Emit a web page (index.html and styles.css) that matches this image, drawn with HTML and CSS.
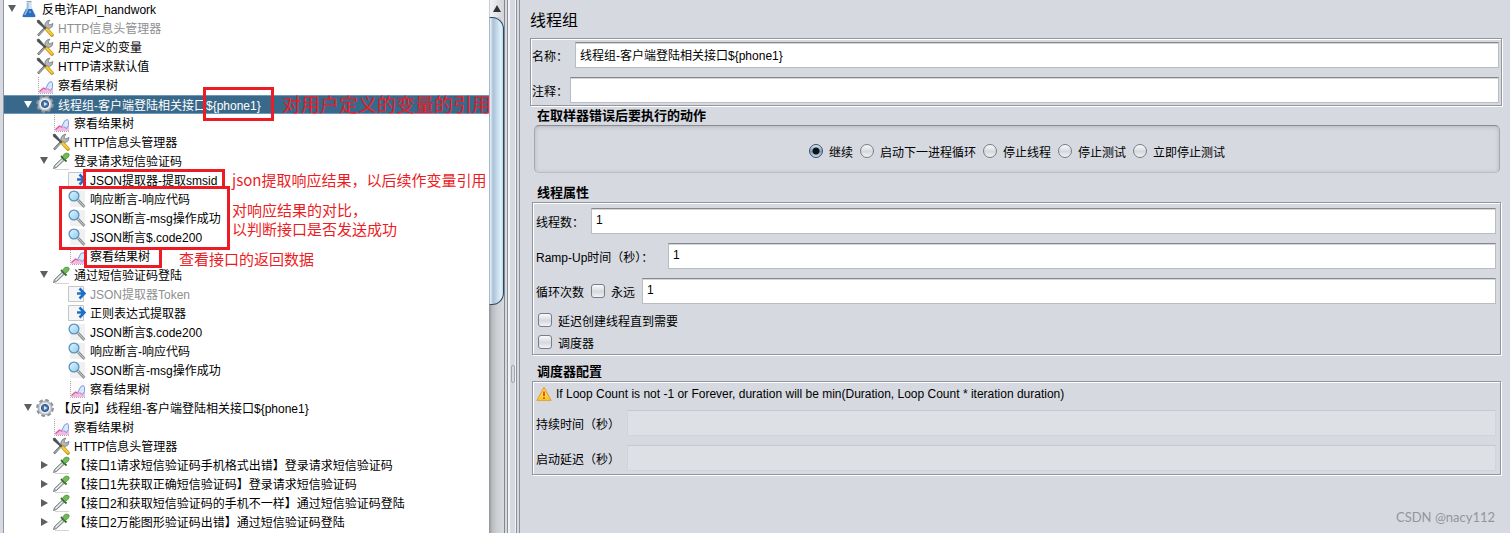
FILE: index.html
```html
<!DOCTYPE html>
<html lang="zh-CN">
<head>
    <meta charset="UTF-8">
    <meta name="viewport" content="width=device-width, initial-scale=1.0">
    <title>线程组</title>
    <link rel="stylesheet" href="styles.css">
</head>
<body>
    <!-- icon set -->
    <svg class="sprite" aria-hidden="true">
        <defs>
            <linearGradient id="lens" x1="0" y1="0" x2="1" y2="1">
                <stop offset="0" stop-color="#e4f5fd"/><stop offset="1" stop-color="#8ccbee"/>
            </linearGradient>
            <linearGradient id="flame" x1="0" y1="0" x2="0" y2="1">
                <stop offset="0" stop-color="#fff36a"/><stop offset="1" stop-color="#fbc01c"/>
            </linearGradient>
        </defs>
        <symbol id="flask" viewBox="0 0 18 18">
            <path d="M7 2h4v5l4 8q1 2-1 2H4q-2 0-1-2l4-8z" fill="#d7e6f4" stroke="#b4c6d8" stroke-width=".7"/>
            <path d="M6 9h6l3 6q1 2-1 2H4q-2 0-1-2z" fill="#2c6fc0"/>
            <path d="M7 3h1.500v6l-3 6H4l3-7z" fill="#8db9e4"/>
            <circle cx="10" cy="12" r="1" fill="#7ab0ea"/>
            <path d="M6.500 1.500h5" stroke="#93a4b5"/>
        </symbol>
        <symbol id="tools" viewBox="0 0 18 18">
            <path d="M2 16.500 10 8" stroke="#5d6266" stroke-width="2.400"/>
            <path d="M2.500 16 10 8.500" stroke="#d5d8da" stroke-width="1"/>
            <path d="M9 8.500q-1-4 2-6.500l3-1-2 3 1.500 2 3.500-1.500q0 4-3.500 5z" fill="#b3b7b9" stroke="#6c7073" stroke-width=".7"/>
            <path d="M1 1.500l2-.5L10 9 9 10 1.500 3.500z" fill="#4d5154" stroke="#3d4043" stroke-width=".5"/>
            <path d="M11 10.500 16 16" stroke="#b98f14" stroke-width="3.600" stroke-linecap="round"/>
            <path d="M11 10.500 15.800 15.500" stroke="#f7ca38" stroke-width="2.400" stroke-linecap="round"/>
        </symbol>
        <symbol id="chart" viewBox="0 0 18 18">
            <path d="M2 1h15v16H2z" fill="#fbfbfc"/>
            <path d="M2.500 1v16.500H18" fill="none" stroke="#a8a8b0" stroke-dasharray="1 1"/>
            <path d="M3 17v-1l4-4 3 1 2-3 5 2v5z" fill="#f5b8e4"/>
            <path d="M3.500 15.500l4-3.500 3 1.500" fill="none" stroke="#e0568c" stroke-width="1.200"/>
            <path d="M9.500 13q0-3 2-4 .5-3 4-3.500l1 1.500v4l-2 3-3-2z" fill="#d9e6fb"/>
            <path d="M9.500 13l2-4q.5-3 4-3.500l1 2v4l-2 3-3-2" fill="none" stroke="#7c9ce0"/>
        </symbol>
        <symbol id="gear" viewBox="0 0 18 18">
            <circle cx="9" cy="9" r="7.700" fill="none" stroke="#8b9198" stroke-width="2.400" stroke-dasharray="3.540 2.508"/>
            <circle cx="9" cy="9" r="7" fill="#c9cdd2" stroke="#9ba1a8" stroke-width=".8"/>
            <circle cx="9" cy="9" r="5.200" fill="#eef0f2"/>
            <circle cx="9" cy="9" r="3.600" fill="#4274b4" stroke="#36527c"/>
            <path d="M8 7l3.500 2L8 11z" fill="#d8e8fa"/>
        </symbol>
        <symbol id="dropper" viewBox="0 0 18 18">
            <path d="M3 17.500h14" stroke="#d4d4d4"/>
            <path d="M1.500 16.500l1-3L10.500 6l2 2L4.500 15.500z" fill="#c3cbcb" stroke="#6b7072" stroke-width=".9"/>
            <path d="M4 14l6-6" stroke="#fff" stroke-width=".8"/>
            <path d="M9 4l5.500 5.500" stroke="#36672e" stroke-width="1.800"/>
            <path d="M10.500 4.500q2-4 4.500-3.500 3 .5 2 3-1 2-4 3.500z" fill="#74b957" stroke="#4a8d3a" stroke-width=".7"/>
        </symbol>
        <symbol id="arrow" viewBox="0 0 18 18">
            <path d="M.5 1.500h15v15H.5z" fill="#f6f6f7" stroke="#c3c5c8"/>
            <path d="M9 8.500h7M11.500 3.500l5 5-5 5" fill="none" stroke="#1f6fc8" stroke-width="2.600"/>
        </symbol>
        <symbol id="magnifier" viewBox="0 0 18 18">
            <path d="M2 1h15v16H2z" fill="#f0f0f1"/>
            <path d="M10 10l6.500 7" stroke="#85898c" stroke-width="2.600"/>
            <path d="M10 10l6.500 7" stroke="#d0d3d5"/>
            <circle cx="6" cy="6" r="4.900" fill="url(#lens)" stroke="#5a93bb" stroke-width="1.300"/>
        </symbol>
        <symbol id="warning" viewBox="0 0 16 16">
            <path d="M8 1.500 15 14.500H1z" fill="url(#flame)" stroke="#e8a23a" stroke-width="1.200" stroke-linejoin="round"/>
            <path d="M8 5.500v4.500M8 11.200v1.800" stroke="#d0501a" stroke-width="1.800"/>
        </symbol>
    </svg>

    <div class="window">
        <div class="tree-pane">
            <ul class="tree">
                <li class="node"><button class="toggle open" aria-label="折叠"></button><svg class="icon"><use href="#flask"/></svg>反电诈API_handwork</li>
                <li class="node level-1 disabled"><span class="toggle"></span><svg class="icon"><use href="#tools"/></svg>HTTP信息头管理器</li>
                <li class="node level-1"><span class="toggle"></span><svg class="icon"><use href="#tools"/></svg>用户定义的变量</li>
                <li class="node level-1"><span class="toggle"></span><svg class="icon"><use href="#tools"/></svg>HTTP请求默认值</li>
                <li class="node level-1"><span class="toggle"></span><svg class="icon"><use href="#chart"/></svg>察看结果树</li>
                <li class="node level-1 selected"><button class="toggle open" aria-label="折叠"></button><svg class="icon"><use href="#gear"/></svg>线程组-客户端登陆相关接口${phone1}</li>
                <li class="node level-2"><span class="toggle"></span><svg class="icon"><use href="#chart"/></svg>察看结果树</li>
                <li class="node level-2"><span class="toggle"></span><svg class="icon"><use href="#tools"/></svg>HTTP信息头管理器</li>
                <li class="node level-2"><button class="toggle open" aria-label="折叠"></button><svg class="icon"><use href="#dropper"/></svg>登录请求短信验证码</li>
                <li class="node level-3"><span class="toggle"></span><svg class="icon"><use href="#arrow"/></svg>JSON提取器-提取smsid</li>
                <li class="node level-3"><span class="toggle"></span><svg class="icon"><use href="#magnifier"/></svg>响应断言-响应代码</li>
                <li class="node level-3"><span class="toggle"></span><svg class="icon"><use href="#magnifier"/></svg>JSON断言-msg操作成功</li>
                <li class="node level-3"><span class="toggle"></span><svg class="icon"><use href="#magnifier"/></svg>JSON断言$.code200</li>
                <li class="node level-3"><span class="toggle"></span><svg class="icon"><use href="#chart"/></svg>察看结果树</li>
                <li class="node level-2"><button class="toggle open" aria-label="折叠"></button><svg class="icon"><use href="#dropper"/></svg>通过短信验证码登陆</li>
                <li class="node level-3 disabled"><span class="toggle"></span><svg class="icon"><use href="#arrow"/></svg>JSON提取器Token</li>
                <li class="node level-3"><span class="toggle"></span><svg class="icon"><use href="#arrow"/></svg>正则表达式提取器</li>
                <li class="node level-3"><span class="toggle"></span><svg class="icon"><use href="#magnifier"/></svg>JSON断言$.code200</li>
                <li class="node level-3"><span class="toggle"></span><svg class="icon"><use href="#magnifier"/></svg>响应断言-响应代码</li>
                <li class="node level-3"><span class="toggle"></span><svg class="icon"><use href="#magnifier"/></svg>JSON断言-msg操作成功</li>
                <li class="node level-3"><span class="toggle"></span><svg class="icon"><use href="#chart"/></svg>察看结果树</li>
                <li class="node level-1"><button class="toggle open" aria-label="折叠"></button><svg class="icon"><use href="#gear"/></svg>【反向】线程组-客户端登陆相关接口${phone1}</li>
                <li class="node level-2"><span class="toggle"></span><svg class="icon"><use href="#chart"/></svg>察看结果树</li>
                <li class="node level-2"><span class="toggle"></span><svg class="icon"><use href="#tools"/></svg>HTTP信息头管理器</li>
                <li class="node level-2"><button class="toggle closed" aria-label="展开"></button><svg class="icon"><use href="#dropper"/></svg>【接口1请求短信验证码手机格式出错】登录请求短信验证码</li>
                <li class="node level-2"><button class="toggle closed" aria-label="展开"></button><svg class="icon"><use href="#dropper"/></svg>【接口1先获取正确短信验证码】登录请求短信验证码</li>
                <li class="node level-2"><button class="toggle closed" aria-label="展开"></button><svg class="icon"><use href="#dropper"/></svg>【接口2和获取短信验证码的手机不一样】通过短信验证码登陆</li>
                <li class="node level-2"><button class="toggle closed" aria-label="展开"></button><svg class="icon"><use href="#dropper"/></svg>【接口2万能图形验证码出错】通过短信验证码登陆</li>
            </ul>

            <!-- red notes over the tree -->
            <div class="mark mark-variable"></div>
            <div class="mark mark-extractor"></div>
            <div class="mark mark-asserts"></div>
            <div class="mark mark-results"></div>
            <p class="note note-variable">对用户定义的变量的引用</p>
            <p class="note note-extractor">json提取响应结果，以后续作变量引用</p>
            <p class="note note-asserts">对响应结果的对比，<br>以判断接口是否发送成功</p>
            <p class="note note-results">查看接口的返回数据</p>
        </div>

        <div class="scrollbar">
            <button class="scroll-up" aria-label="向上滚动"></button>
            <div class="thumb"></div>
        </div>
        <div class="divider"><span class="grip"></span></div>

        <main class="panel">
            <h1>线程组</h1>
            <div class="box name-box">
                <div class="row">
                    <label for="name">名称：</label>
                    <input class="field" type="text" id="name" value="线程组-客户端登陆相关接口${phone1}">
                </div>
                <div class="row row-tight">
                    <label for="comment">注释：</label>
                    <input class="field" type="text" id="comment">
                </div>
            </div>

            <h2>在取样器错误后要执行的动作</h2>
            <div class="actions">
                <label><input type="radio" name="action" checked>继续</label>
                <label><input type="radio" name="action">启动下一进程循环</label>
                <label><input type="radio" name="action">停止线程</label>
                <label><input type="radio" name="action">停止测试</label>
                <label><input type="radio" name="action">立即停止测试</label>
            </div>

            <h2 class="thread-title">线程属性</h2>
            <div class="box group">
                <div class="row">
                    <label for="threads">线程数：</label>
                    <input class="field" type="text" id="threads" value="1">
                </div>
                <div class="row">
                    <label class="ramp-label" for="ramp">Ramp-Up时间（秒）：</label>
                    <input class="field" type="text" id="ramp" value="1">
                </div>
                <div class="row">
                    <label for="loops">循环次数</label>
                    <label class="check"><input type="checkbox">永远</label>
                    <input class="field" type="text" id="loops" value="1">
                </div>
                <div class="checks">
                    <label class="check"><input type="checkbox">延迟创建线程直到需要</label>
                    <label class="check"><input type="checkbox">调度器</label>
                </div>
            </div>

            <h2 class="scheduler-title">调度器配置</h2>
            <div class="box group scheduler">
                <p class="hint"><svg class="warn-icon"><use href="#warning"/></svg>If Loop Count is not -1 or Forever, duration will be min(Duration, Loop Count * iteration duration)</p>
                <div class="row">
                    <label for="duration">持续时间（秒）</label>
                    <input class="field" type="text" id="duration" disabled>
                </div>
                <div class="row">
                    <label for="delay">启动延迟（秒）</label>
                    <input class="field" type="text" id="delay" disabled>
                </div>
            </div>
        </main>
        <span class="watermark">CSDN @nacy112</span>
    </div>
</body>
</html>
```

FILE: styles.css
```css
* {
    box-sizing: border-box;
}
body {
    margin: 0;
    font-family: "Liberation Sans", "Noto Sans CJK SC", sans-serif;
    font-size: 12px;
    color: #000;
    background: #d6d9e0;
}
h1, h2, p, ul {
    margin: 0;
    padding: 0;
}
input, button {
    font: inherit;
    margin: 0;
}
.sprite {
    position: absolute;
    width: 0;
    height: 0;
}
.window {
    position: relative;
    display: flex;
    height: 100vh;
    overflow: hidden;
}

/* tree */
.tree-pane {
    position: relative;
    flex: 0 0 486px;
    margin-left: 3px;
    border-left: 1px solid #9297a1;
    background: #fff;
}
.tree {
    list-style: none;
}
.node {
    display: flex;
    align-items: center;
    height: 19px;
    padding-bottom: 2px;
    white-space: nowrap;
}
.level-1 {
    padding-left: 16px;
}
.level-2 {
    padding-left: 32px;
}
.level-3 {
    padding-left: 48px;
}
.disabled {
    color: #8e8f91;
}
.selected {
    padding-bottom: 1px;
    color: #fff;
    background: #39698a;
    border-top: 1px solid #6d98bd;
    border-bottom: 1px solid #6d98bd;
}
.toggle {
    display: flex;
    align-items: center;
    justify-content: center;
    flex: 0 0 16px;
    height: 18px;
    padding: 0;
    border: none;
    background: none;
    color: #5c5f63;
}
.selected .toggle {
    color: #fff;
}
.open::before {
    content: "";
    border: 4px solid transparent;
    border-top: 7px solid currentColor;
    border-bottom: none;
}
.closed::before {
    content: "";
    border: 4px solid transparent;
    border-left: 7px solid currentColor;
    border-right: none;
}
.icon {
    flex: none;
    width: 18px;
    height: 18px;
    margin-right: 4px;
}

/* notes */
.mark {
    position: absolute;
    border: 3px solid #ed1c24;
}
.mark-variable {
    left: 199px;
    top: 87px;
    width: 71px;
    height: 34px;
}
.mark-extractor {
    left: 79px;
    top: 169px;
    width: 142px;
    height: 20px;
}
.mark-asserts {
    left: 55px;
    top: 186px;
    width: 171px;
    height: 64px;
}
.mark-results {
    left: 80px;
    top: 247px;
    width: 78px;
    height: 21px;
}
.note {
    position: absolute;
    color: #ed1c24;
    font-family: "Noto Sans CJK SC", sans-serif;
    font-size: 15px;
    line-height: 19px;
    white-space: nowrap;
}
.note-variable {
    left: 278px;
    top: 94px;
    font-size: 19px;
}
.note-extractor {
    left: 228px;
    top: 170px;
}
.note-asserts {
    left: 228px;
    top: 200px;
}
.note-results {
    left: 175px;
    top: 249px;
}

/* scrollbar and divider */
.scrollbar {
    display: flex;
    flex-direction: column;
    flex: 0 0 16px;
    border-right: 1px solid #84878f;
    background: linear-gradient(to right, #8f9197, #b9bbc0 3px, #cdcfd4 8px, #d8dade);
}
.scroll-up {
    display: flex;
    align-items: center;
    justify-content: center;
    height: 17px;
    padding: 0;
    border: none;
    border-left: 1px solid #c9ccd2;
    background: linear-gradient(to right, #f1f2f4, #d2d4d9);
}
.scroll-up::before {
    content: "";
    border: 4px solid transparent;
    border-bottom: 7px solid #333;
    border-top: none;
}
.thumb {
    height: 288px;
    border: 1px solid #2e475d;
    border-left: 1px solid #a7b6c6;
    border-radius: 0 12px 12px 0;
    background: linear-gradient(to right, #edf4fa, #a9c2d8 3px, #bed3e4 6px, #e0f2fb 11px, #b9d5e8);
}
.divider {
    display: flex;
    align-items: center;
    justify-content: center;
    flex: 0 0 15px;
    margin-left: 1px;
    background: linear-gradient(to right, #d6d9e0 1px, #8d9097 1px 2px, #f2f3f5 2px 4px, #d6d9e0 4px 9px, #f2f3f5 9px 10px, #8d9097 10px 11px, #d6d9e0 11px 13px, #8d9097 13px 14px, #d6d9e0 14px);
}
.grip {
    width: 4px;
    height: 18px;
    margin: 214px 2px 0 0;
    border: 1px solid #a2a5ab;
    border-radius: 2px;
}

/* right panel */
.panel {
    flex: 1;
    min-width: 0;
    padding: 10px 9px 0;
}
h1 {
    height: 28px;
    font-size: 16px;
    font-weight: normal;
    line-height: 22px;
}
h2 {
    padding-left: 7px;
    font-size: 13px;
    line-height: 19px;
}
.thread-title {
    margin-top: 10px;
}
.scheduler-title {
    margin-top: 7px;
}
.box {
    display: flex;
    flex-direction: column;
    gap: 9px;
    border: 1px solid #93969c;
    box-shadow: inset 1px 1px #fff, 1px 1px #fff;
}
.name-box {
    margin-right: -1px;
    padding: 3px 2px 2px 1px;
}
.group {
    margin-left: 2px;
    padding: 5px 4px 1px 3px;
}
.row {
    display: flex;
    align-items: center;
    gap: 7px;
}
.row-tight {
    gap: 2px;
}
.ramp-label {
    min-width: 125px;
}
.field {
    flex: 1;
    min-width: 0;
    height: 26px;
    padding: 0 4px 2px;
    border: 1px solid #b9bcc1;
    border-top-color: #85888d;
    border-radius: 0;
    background: #fff;
    box-shadow: inset 0 1px #d4d5d7;
    outline: none;
}
.field:disabled {
    border-color: #d1d4d9;
    border-top-color: #c5c8ce;
    background: #dde0e5;
    box-shadow: none;
}
.actions {
    display: flex;
    align-items: center;
    justify-content: center;
    gap: 7px;
    height: 48px;
    margin: 0 1px 0 4px;
    padding-top: 4px;
    border: 1px solid #a5a8ad;
    border-top-color: #888b90;
    border-bottom-color: #babdc2;
    border-radius: 5px;
    box-shadow: inset 0 1px 4px #b4b7bb;
}
.actions label, .check {
    display: flex;
    align-items: center;
    gap: 6px;
}
input[type="radio"], input[type="checkbox"] {
    appearance: none;
    width: 14px;
    height: 14px;
    border: 1px solid #777e89;
    background: linear-gradient(#fafafb, #d6d8dd 55%, #f2f3f5);
}
input[type="radio"] {
    border-radius: 50%;
}
input[type="checkbox"] {
    border-radius: 3px;
}
input[type="radio"]:checked {
    border-color: #33516d;
    background: radial-gradient(circle, #101214 3px, transparent 4px), linear-gradient(#dce8f2, #7e9fbb 55%, #c5dced);
}
.checks {
    margin-top: -4px;
    padding-left: 2px;
}
.checks .check {
    height: 22px;
}
.scheduler {
    padding-top: 0;
    padding-bottom: 3px;
}
.hint {
    display: flex;
    align-items: center;
    gap: 4px;
    height: 19px;
    padding-top: 5px;
}
.warn-icon {
    width: 16px;
    height: 16px;
}
.watermark {
    position: absolute;
    right: 15px;
    bottom: 8px;
    color: #93969c;
    font-family: Lato, sans-serif;
    font-size: 13px;
}
```
